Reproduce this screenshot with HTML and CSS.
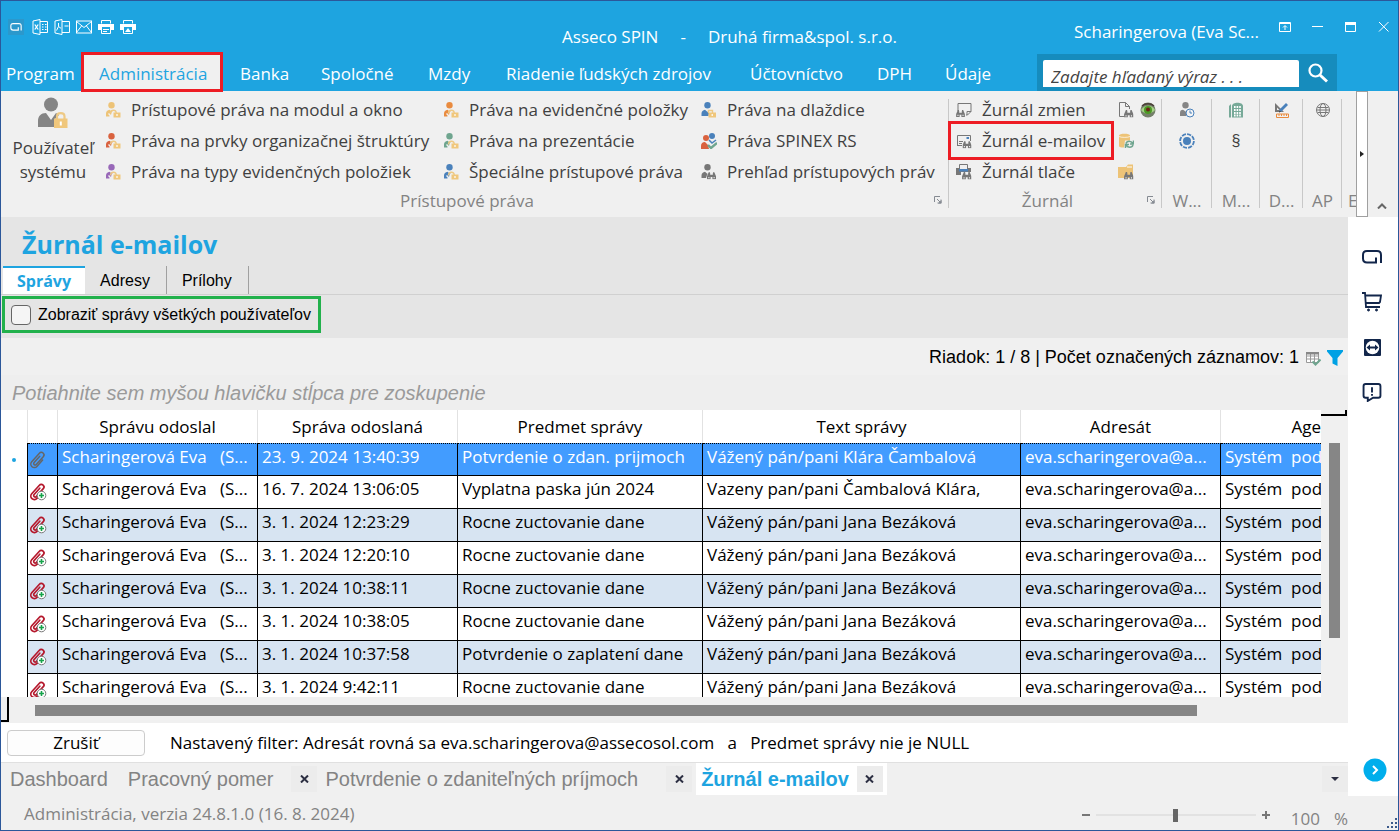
FILE: index.html
```html
<!DOCTYPE html>
<html lang="sk">
<head>
<meta charset="utf-8">
<title>Asseco SPIN</title>
<link rel="stylesheet" href="styles.css">
</head>
<body>
<svg class="defs" aria-hidden="true">
  <symbol id="user-lock" viewBox="0 0 16 16">
    <circle cx="6.5" cy="3.2" r="3.2" fill="currentColor"/>
    <path d="M1 14.5v-3c0-2 1.500-3.500 3.500-3.700L6 9l1-1 1 .5-1.500 2-.5 2.500-2-2-1 1 1.500 1.500V14.500z" fill="currentColor"/>
    <path d="M5.500 11.500C5.500 9 7 8.200 8.500 8.200S11.200 9 11.200 11" fill="none" stroke="#eec984" stroke-width="1.400"/>
    <rect x="8.500" y="10.500" width="7" height="5" fill="#f0c77c"/><path d="M12 12v2" stroke="#fff" stroke-width="1.200"/>
  </symbol>
  <symbol id="user-open" viewBox="0 0 16 16">
    <circle cx="6.500" cy="3.200" r="3.200" fill="currentColor"/>
    <path d="M.5 14v-2.500C.5 9.500 2 8 4 7.800L6.500 10 8 8v3l-.5 3z" fill="currentColor"/>
    <path d="M7.500 11V8.500h4V11" fill="none" stroke="#eec984" stroke-width="1.400"/>
    <rect x="7.500" y="10.500" width="7.500" height="5" fill="#f0c77c"/><path d="M11.200 12v2" stroke="#fff" stroke-width="1.200"/>
  </symbol>
  <symbol id="binocs" viewBox="0 0 10 8">
    <path d="M0 8V4.500L1.500 1h2v2h3V1h2L10 4.500V8H6V5.500H4V8z" fill="#777"/>
    <path d="M1.500 5.500h1.200v1.300H1.500zM7.300 5.500h1.200v1.300H7.300z" fill="#f0f0f0"/><path d="M1.700 0h1.600v1H1.700zM6.700 0h1.600v1H6.700z" fill="#777"/>
  </symbol>
  <symbol id="launcher" viewBox="0 0 8 8">
    <path d="M.5 6V.5H6M3 3l3.500 3.500M7 3.500V7H3.500" fill="none" stroke="#858a92"/><path d="M7.500 4v3.500H4z" fill="#858a92"/>
  </symbol>
  <symbol id="clip" viewBox="0 0 18 18">
    <path transform="rotate(-48 9 9)" fill="none" stroke="currentColor" stroke-width="1.500" stroke-linecap="round" d="M12 12.500H3.500a3.500 3.500 0 0 1 0-7H15a2.600 2.600 0 0 1 0 5.200H4.500a1.300 1.300 0 0 1 0-2.900H13"/>
  </symbol>
  <symbol id="clip-add" viewBox="0 0 18 18">
    <path transform="rotate(-48 9 9)" fill="none" stroke="#b5182c" stroke-width="1.700" stroke-linecap="round" d="M12 12.500H3.500a3.500 3.500 0 0 1 0-7H15a2.600 2.600 0 0 1 0 5.200H4.500a1.300 1.300 0 0 1 0-2.900H13"/>
    <circle cx="12.500" cy="12.500" r="4.300" fill="#fff" stroke="#777"/><path d="M12.500 10v5M10 12.500h5" stroke="#16a34a" stroke-width="1.600"/>
  </symbol>
  <symbol id="g-mark" viewBox="0 0 20 14">
    <path d="M19 13V5c0-2.800-1.200-4-4-4H5C2.200 1 1 2.200 1 5v3.500C1 11.300 2.200 12.500 5 12.500h9V7.500" fill="none" stroke="currentColor" stroke-width="2"/>
  </symbol>
  <symbol id="x" viewBox="0 0 9 8"><path d="M1 .5l7 7M8 .5l-7 7" stroke="#2c2f42" stroke-width="2"/></symbol>
</svg>

<div class="app">
  <header class="header">
    <div class="titlebar">
      <div class="quick">
        <button class="logo" aria-label="Asseco"><svg width="12" height="8"><use href="#g-mark"/></svg></button>
        <button aria-label="Excel"><svg width="16" height="16" viewBox="0 0 16 16" fill="none" stroke="#fff"><path d="M1 2l7-1.500v15L1 14zM8 2.500h7.500v11H8M10 5.500h1.500M13 5.500h1.500M10 8h1.500M13 8h1.500M10 10.500h1.500M13 10.500h1.500"/><path d="M2.800 5.500l3.400 5M6.200 5.500l-3.400 5" stroke-width="1.300"/></svg></button>
        <button aria-label="PDF"><svg width="16" height="16" viewBox="0 0 16 16" fill="none" stroke="#fff"><path d="M1 2l7-1.500v15L1 14zM8 2.500h7.500v11H8M10.500 7h4M4.500 4v3.500L2.500 11.500M4.500 7.500l2.500 1.800"/></svg></button>
        <button aria-label="E-mail"><svg width="16" height="16" viewBox="0 0 16 16" fill="none" stroke="#fff"><rect x=".5" y="2" width="15" height="12"/><path d="M.5 2.500L8 8.500l7.500-6M.5 13.500l5-6.500M15.500 13.500l-5-6.500"/></svg></button>
        <button aria-label="Tlačiť"><svg width="16" height="16" viewBox="0 0 16 16"><path d="M3.500 4.500v-3h9v3" fill="none" stroke="#fff"/><path d="M0 5h16v6h-3V8H3v3H0z" fill="#fff"/><path d="M3.500 8v6.500h9V8M5 10.500h6M5 12.500h4" fill="none" stroke="#fff"/></svg></button>
        <button aria-label="Rýchla tlač"><svg width="16" height="16" viewBox="0 0 16 16"><path d="M3.500 4.500v-3h9v3" fill="none" stroke="#fff"/><path d="M0 5h16v6h-3V8H3v3H0z" fill="#fff"/><path d="M3.500 8v6.500h9V8" fill="none" stroke="#fff"/><path d="M8 9l3 4H5z" fill="#fff"/></svg></button>
      </div>
      <div class="caption"><span>Asseco SPIN</span><span>-</span><span>Druhá firma&amp;spol. s.r.o.</span></div>
      <div class="account">Scharingerova (Eva Sc...</div>
      <div class="window-buttons">
        <button aria-label="Zobrazenie pása"><svg width="12" height="12" viewBox="0 0 12 12" fill="none" stroke="#fff"><path d="M.5 1.500h11v9H.5zM.5 2.500h11M6 9V5M4 6.500l2-2 2 2"/></svg></button>
        <button aria-label="Minimalizovať"><svg width="12" height="12" viewBox="0 0 12 12"><path d="M0 5.500h11" stroke="#fff"/></svg></button>
        <button aria-label="Maximalizovať"><svg width="12" height="12" viewBox="0 0 12 12"><path d="M.5 1.500h10v9H.5z" fill="none" stroke="#fff"/><path d="M0 1h11v3H0z" fill="#fff"/></svg></button>
        <button aria-label="Zavrieť"><svg width="12" height="12" viewBox="0 0 12 12"><path d="M1 1l9.500 9.500M10.500 1L1 10.500" stroke="#fff"/></svg></button>
      </div>
    </div>
    <nav class="menu">
      <a href="#">Program</a>
      <a href="#" class="current">Administrácia</a>
      <a href="#">Banka</a>
      <a href="#">Spoločné</a>
      <a href="#">Mzdy</a>
      <a href="#">Riadenie ľudských zdrojov</a>
      <a href="#">Účtovníctvo</a>
      <a href="#">DPH</a>
      <a href="#">Údaje</a>
      <form class="search">
        <input type="text" aria-label="Hľadať" placeholder="Zadajte hľadaný výraz . . .">
        <button type="button" aria-label="Hľadať"><svg width="20" height="20" viewBox="0 0 20 20" fill="none" stroke="#fff"><circle cx="7.500" cy="7.500" r="6" stroke-width="2.200"/><path d="M12 12l7 6.500" stroke-width="3"/></svg></button>
      </form>
    </nav>
  </header>

  <section class="ribbon">
    <div class="group rights">
      <div class="group-body">
        <button class="big">
          <svg width="30" height="32" viewBox="0 0 30 32"><circle cx="13" cy="7.500" r="7" fill="#858585"/><path d="M0 30v-6c0-5 3-8 8-8l5 7 5-7 3 2-5 5v7z" fill="#858585"/><path d="M19 22v-2.500c0-4.500 7.500-4.500 7.500 0V22" fill="none" stroke="#eec984" stroke-width="2.200"/><rect x="16" y="21.500" width="13.500" height="9.500" fill="#f0c77c"/><path d="M22.800 24.500v4" stroke="#fff" stroke-width="2"/></svg>
          <span>Používateľ<br>systému</span>
        </button>
        <div class="links first">
          <button><svg class="yellow"><use href="#user-lock"/></svg>Prístupové práva na modul a okno</button>
          <button><svg class="red"><use href="#user-lock"/></svg>Práva na prvky organizačnej štruktúry</button>
          <button><svg class="violet"><use href="#user-lock"/></svg>Práva na typy evidenčných položiek</button>
        </div>
        <div class="links second">
          <button><svg class="orange"><use href="#user-lock"/></svg>Práva na evidenčné položky</button>
          <button><svg class="green"><use href="#user-lock"/></svg>Práva na prezentácie</button>
          <button><svg class="blue"><use href="#user-lock"/></svg>Špeciálne prístupové práva</button>
        </div>
        <div class="links third">
          <button><svg class="blue"><use href="#user-open"/></svg>Práva na dlaždice</button>
          <button><svg viewBox="0 0 16 16"><circle cx="11" cy="3" r="3" fill="#4a81bb"/><circle cx="5" cy="5" r="3" fill="#d9623f"/><path d="M0 16v-3c0-2.500 1.500-4 4-4l3 3 1 4z" fill="#d9623f"/><path d="M8 7l3 3 4-3" fill="none" stroke="#4a81bb" stroke-width="1.500"/><path d="M7 12l3 3 6-5" fill="none" stroke="#6fa58f" stroke-width="2.400"/></svg>Práva SPINEX RS</button>
          <button><svg viewBox="0 0 16 16"><circle cx="6.500" cy="3.200" r="3.200" fill="#777"/><path d="M.5 14v-2.500C.5 9.500 2 8 4 7.800L6.500 10 8 8l-2 3-1 3z" fill="#777"/><use href="#binocs" x="6" y="8" width="9" height="7.500"/></svg>Prehľad prístupových práv</button>
        </div>
      </div>
      <div class="group-label with-launch">Prístupové práva<button class="launch" aria-label="Viac"><svg width="8" height="8"><use href="#launcher"/></svg></button></div>
    </div>
    <div class="group journal">
      <div class="group-body">
        <div class="links journal-links">
          <button><svg viewBox="0 0 16 16"><path d="M2 9V1.500h13v8L11.500 13H10" fill="none" stroke="#777"/><path d="M11 13V9.500h4" fill="none" stroke="#777"/><use href="#binocs" x="0" y="8" width="9" height="7"/></svg>Žurnál zmien</button>
          <button class="marked"><svg viewBox="0 0 16 16"><path d="M1.500 7V2.500h13V8" fill="none" stroke="#777"/><path d="M10.500 4h2.500v2h-2.500z" fill="#4a81bb"/><path d="M3 8.500h4M3 10.500h3M1 12.500h5" stroke="#777"/><path d="M1.500 6v7" stroke="#777"/><use href="#binocs" x="6.500" y="8" width="9" height="7.500"/></svg>Žurnál e-mailov</button>
          <button><svg viewBox="0 0 16 16"><path d="M3.500 5V.5h8V5" fill="none" stroke="#777"/><path d="M0 4h3v2h9V4h3v4H5v3H0z" fill="#777"/><path d="M3 5h9v2.500H3z" fill="#4a81bb"/><use href="#binocs" x="6" y="8" width="9.500" height="7.500"/></svg>Žurnál tlače</button>
        </div>
        <div class="icons two">
          <button aria-label="Dokument"><svg viewBox="0 0 16 16"><path d="M6 14.500H1.500V.5h6l4 4V7M7.500.5v4h4" fill="none" stroke="#777"/><use href="#binocs" x="6" y="8" width="9.500" height="7.500"/></svg></button>
          <button aria-label="Sledovanie"><svg viewBox="0 0 16 16"><circle cx="8" cy="8" r="7.500" fill="#75806a"/><path d="M1 8c3-5 11-6 14 0-3 4-11 5-14 0z" fill="#a5cf86"/><circle cx="8" cy="8" r="4" fill="#4c9a25"/><circle cx="8" cy="7.500" r="2" fill="#6a2417"/><path d="M2 4c3-3 9-3 12 0" fill="none" stroke="#4b3e38" stroke-width="1.500"/></svg></button>
          <button aria-label="Databáza"><svg viewBox="0 0 16 16"><path d="M1 2.500C1 0 12 0 12 2.500v5H7l-1 7c-3 0-5-.5-5-1.500z" fill="#edc377"/><path d="M1 3.500c2 1.200 9 1.200 11 0" fill="none" stroke="#fff" stroke-width=".7"/><path d="M8 10.500c1-3 5-3 7 0M15.500 7.500v3.500H12M15 12c-1 3-5 3-7 0M7.500 15v-3.500H11" fill="none" stroke="#6fa58f" stroke-width="1.500"/></svg></button>
          <span></span>
          <button aria-label="Priečinok"><svg viewBox="0 0 16 16"><path d="M0 3h8l2-2.500h5V14H0z" fill="#edc377"/><path d="M9 3h5" stroke="#fff"/><use href="#binocs" x="6" y="8" width="9.500" height="7.500"/></svg></button>
        </div>
      </div>
      <div class="group-label with-launch">Žurnál<button class="launch" aria-label="Viac"><svg width="8" height="8"><use href="#launcher"/></svg></button></div>
    </div>
    <div class="group w50">
      <div class="group-body icons">
        <button aria-label="Čas používateľa"><svg viewBox="0 0 16 16"><circle cx="6.500" cy="3.200" r="3.200" fill="#858585"/><path d="M1 14v-3c0-2 1-3.200 3-3.200l3 2V14z" fill="#858585"/><circle cx="11" cy="11" r="4" fill="#f5f5f5" stroke="#4a81bb"/><path d="M11 8.500V11h2" fill="none" stroke="#4a81bb"/></svg></button>
        <button aria-label="Proces"><svg viewBox="0 0 16 16"><circle cx="8" cy="8" r="4" fill="#4a81bb"/><circle cx="8" cy="8" r="6.900" fill="none" stroke="#4a81bb" stroke-width="1.800" stroke-dasharray="4.200 1.200"/></svg></button>
      </div>
      <div class="group-label">W...</div>
    </div>
    <div class="group w48">
      <div class="group-body icons">
        <button aria-label="Budova"><svg viewBox="0 0 16 16"><path d="M1 15.500V4l2-2v13.500z" fill="#77a998"/><path d="M4 15.500V4c0-4.500 11-4.500 11 0v11.500z" fill="#77a998"/><path d="M6 5h7M6 8h7M6 11h7M6 13.500h7" stroke="#fff" stroke-width="2" stroke-dasharray="1.600 1"/></svg></button>
        <button class="section-sign">§</button>
      </div>
      <div class="group-label">M...</div>
    </div>
    <div class="group w43">
      <div class="group-body icons">
        <button aria-label="Návrh"><svg viewBox="0 0 16 16"><path d="M1 1l9 9H1z" fill="#777"/><path d="M3 5.500L5.500 8H3z" fill="#f0f0f0"/><path d="M6 9l7-7" stroke="#4a81bb" stroke-width="2.800"/><path d="M5 10l1.500-.5" stroke="#333"/><path d="M2.500 12h12v3.500h-12zM5 12v2M7.500 12v2M10 12v2M12.500 12v2" fill="none" stroke="#e98b3f"/></svg></button>
      </div>
      <div class="group-label">D...</div>
    </div>
    <div class="group w39">
      <div class="group-body icons">
        <button aria-label="Web"><svg viewBox="0 0 16 16" fill="none" stroke="#777"><circle cx="8" cy="8" r="6.500"/><ellipse cx="8" cy="8" rx="3" ry="6.500"/><path d="M1.500 8h13M2.500 5.500h11M2.500 10.500h11"/></svg></button>
      </div>
      <div class="group-label">AP</div>
    </div>
    <div class="group cut"><div class="group-body"></div><div class="group-label">E</div></div>
    <button class="ribbon-next" aria-label="Ďalej"><svg width="4" height="6"><path d="M0 0l4 3-4 3z" fill="#222"/></svg></button>
    <button class="collapse" aria-label="Zbaliť"><svg width="10" height="6" viewBox="0 0 10 6"><path d="M1 5.500l4-4 4 4" fill="none" stroke="#666" stroke-width="2"/></svg></button>
  </section>

  <div class="workspace">
    <main class="content">
      <div class="page-head">
        <h1>Žurnál e-mailov</h1>
        <div class="subtabs">
          <button class="active">Správy</button><button>Adresy</button><button>Prílohy</button>
        </div>
      </div>
      <div class="options">
        <label><input type="checkbox">Zobraziť správy všetkých používateľov</label>
      </div>
      <div class="counter">
        <span>Riadok: 1 / 8 | Počet označených záznamov: 1</span>
        <svg width="16" height="16" viewBox="0 0 16 16"><path d="M1.500 2.500h12v10h-12zM1.500 6h12M1.500 9h12M5.500 3v9.500M9.500 3v9.500" fill="#fff" stroke="#999"/><path d="M1 2h13v2.500H1z" fill="#888"/><path d="M7.500 11.500l3 3 5-5" fill="none" stroke="#6fa58f" stroke-width="2"/></svg>
        <svg width="16" height="16" viewBox="0 0 16 16"><path d="M0 0h16v1.500L10.500 8v8L5.500 13.500V8L0 1.500z" fill="#00a1e4"/></svg>
      </div>
      <div class="grouping">Potiahnite sem myšou hlavičku stĺpca pre zoskupenie</div>
      <div class="grid">
        <div class="grid-view">
          <table>
            <colgroup><col class="c-mark"><col class="c-clip"><col class="c-200"><col class="c-200"><col class="c-subject"><col class="c-text"><col class="c-200"><col></colgroup>
            <thead>
              <tr><th></th><th></th><th>Správu odoslal</th><th>Správa odoslaná</th><th>Predmet správy</th><th>Text správy</th><th>Adresát</th><th class="cut-head">Age</th></tr>
            </thead>
            <tbody>
              <tr class="selected"><td><span class="dot"></span></td><td><svg><use href="#clip"/></svg></td><td>Scharingerová Eva &nbsp; (S...</td><td>23. 9. 2024 13:40:39</td><td>Potvrdenie o zdan. prijmoch</td><td>Vážený pán/pani Klára Čambalová</td><td>eva.scharingerova@a...</td><td>Systém&nbsp; pod</td></tr>
              <tr><td></td><td><svg><use href="#clip-add"/></svg></td><td>Scharingerová Eva &nbsp; (S...</td><td>16. 7. 2024 13:06:05</td><td>Vyplatna paska jún 2024</td><td>Vazeny pan/pani Čambalová Klára,</td><td>eva.scharingerova@a...</td><td>Systém&nbsp; pod</td></tr>
              <tr><td></td><td><svg><use href="#clip-add"/></svg></td><td>Scharingerová Eva &nbsp; (S...</td><td>3. 1. 2024 12:23:29</td><td>Rocne zuctovanie dane</td><td>Vážený pán/pani Jana Bezáková</td><td>eva.scharingerova@a...</td><td>Systém&nbsp; pod</td></tr>
              <tr><td></td><td><svg><use href="#clip-add"/></svg></td><td>Scharingerová Eva &nbsp; (S...</td><td>3. 1. 2024 12:20:10</td><td>Rocne zuctovanie dane</td><td>Vážený pán/pani Jana Bezáková</td><td>eva.scharingerova@a...</td><td>Systém&nbsp; pod</td></tr>
              <tr><td></td><td><svg><use href="#clip-add"/></svg></td><td>Scharingerová Eva &nbsp; (S...</td><td>3. 1. 2024 10:38:11</td><td>Rocne zuctovanie dane</td><td>Vážený pán/pani Jana Bezáková</td><td>eva.scharingerova@a...</td><td>Systém&nbsp; pod</td></tr>
              <tr><td></td><td><svg><use href="#clip-add"/></svg></td><td>Scharingerová Eva &nbsp; (S...</td><td>3. 1. 2024 10:38:05</td><td>Rocne zuctovanie dane</td><td>Vážený pán/pani Jana Bezáková</td><td>eva.scharingerova@a...</td><td>Systém&nbsp; pod</td></tr>
              <tr><td></td><td><svg><use href="#clip-add"/></svg></td><td>Scharingerová Eva &nbsp; (S...</td><td>3. 1. 2024 10:37:58</td><td>Potvrdenie o zaplatení dane</td><td>Vážený pán/pani Jana Bezáková</td><td>eva.scharingerova@a...</td><td>Systém&nbsp; pod</td></tr>
              <tr><td></td><td><svg><use href="#clip-add"/></svg></td><td>Scharingerová Eva &nbsp; (S...</td><td>3. 1. 2024 9:42:11</td><td>Rocne zuctovanie dane</td><td>Vážený pán/pani Jana Bezáková</td><td>eva.scharingerova@a...</td><td>Systém&nbsp; pod</td></tr>
            </tbody>
          </table>
        </div>
        <div class="vscroll"><div class="corner"></div><div class="thumb"></div></div>
      </div>
      <div class="hscroll"><div class="corner"></div><div class="thumb"></div></div>
      <div class="filter">
        <button>Zrušiť</button>
        <span>Nastavený filter: Adresát rovná sa eva.scharingerova@assecosol.com &nbsp; a &nbsp; Predmet správy nie je NULL</span>
      </div>
      <div class="doc-tabs">
        <div class="doc dash"><a href="#">Dashboard</a></div>
        <div class="doc"><a href="#">Pracovný pomer</a><button aria-label="Zavrieť"><svg width="9" height="8"><use href="#x"/></svg></button></div>
        <div class="doc wide"><a href="#">Potvrdenie o zdaniteľných príjmoch</a><button aria-label="Zavrieť"><svg width="9" height="8"><use href="#x"/></svg></button></div>
        <div class="doc open"><a href="#">Žurnál e-mailov</a><button aria-label="Zavrieť"><svg width="9" height="8"><use href="#x"/></svg></button></div>
        <button class="more" aria-label="Ďalšie karty"><svg width="8" height="4"><path d="M0 0h8L4 4z" fill="#2c2f42"/></svg></button>
      </div>
    </main>
    <aside class="side">
      <button aria-label="Asseco"><svg width="20" height="14"><use href="#g-mark"/></svg></button>
      <button aria-label="Obchod"><svg width="20" height="20" viewBox="0 0 20 20" fill="none" stroke="currentColor" stroke-width="1.800"><path d="M0 1h3l1 14h14M3.500 3.500H19l-1 6.500-1 1H4"/><circle cx="6.500" cy="18" r="1" fill="currentColor" stroke-width="1"/><circle cx="14.500" cy="18" r="1" fill="currentColor" stroke-width="1"/></svg></button>
      <button aria-label="TeamViewer"><svg width="17" height="17" viewBox="0 0 17 17"><rect width="17" height="17" rx="1" fill="currentColor"/><circle cx="8.500" cy="8.500" r="6.800" fill="#fff"/><path d="M2.500 8.500L6 5.500v2h5v-2l3.500 3-3.500 3v-2H6v2z" fill="currentColor"/></svg></button>
      <button aria-label="Správa"><svg width="20" height="19" viewBox="0 0 18 18" fill="none" stroke="currentColor" stroke-width="1.800"><path d="M3 1h12c1.500 0 2 .5 2 2v9c0 1.500-.5 2-2 2h-5l-5 3v-3H3c-1.500 0-2-.5-2-2V3c0-1.500.5-2 2-2zM9 4v5M9 10.500v1.500"/></svg></button>
      <button class="expand" aria-label="Rozbaliť"><svg width="24" height="24" viewBox="0 0 24 24"><circle cx="12" cy="12" r="11.500" fill="#00aeec"/><path d="M10 8l4 4-4 4" fill="none" stroke="#fff" stroke-width="2"/></svg></button>
    </aside>
  </div>

  <footer class="status">
    <span class="version">Administrácia, verzia 24.8.1.0 (16. 8. 2024)</span>
    <div class="zoom">
      <button aria-label="Zmenšiť"><svg width="8" height="8"><path d="M0 4h8" stroke="#777" stroke-width="2"/></svg></button>
      <input type="range" min="0" max="200" value="100" aria-label="Mierka">
      <button aria-label="Zväčšiť"><svg width="8" height="8"><path d="M0 4h8M4 0v8" stroke="#777" stroke-width="2"/></svg></button>
    </div>
    <span class="percent"><span>100</span><span>%</span></span>
    <svg class="grip" width="12" height="12"><path d="M9 1h2M5 5h2M9 5h2M1 9h2M5 9h2M9 9h2" stroke="#3c5a8a" stroke-width="2"/></svg>
  </footer>
</div>
</body>
</html>
```
FILE: styles.css
```css
* { box-sizing: border-box; }
body {
  margin: 0;
  font-family: "Open Sans", "Noto Sans", sans-serif;
  font-size: 17px;
  line-height: 24px;
  color: #000;
}
button {
  border: 0;
  padding: 0;
  background: none;
  font: inherit;
  color: inherit;
}
a { color: inherit; text-decoration: none; }
svg { display: block; flex: none; }
.defs { position: absolute; width: 0; height: 0; }

.app {
  display: flex;
  flex-direction: column;
  height: 100vh;
  border: 1px solid #2b579a;
  background: #f0f0f0;
  overflow: hidden;
  white-space: nowrap;
}

/* Header */
.header { background: #1ea4e0; color: #fff; }
.titlebar { display: flex; height: 52px; }
.quick { display: flex; gap: 6px; padding: 18px 0 0 7px; align-items: flex-start; }
.quick .logo {
  display: grid;
  place-items: center;
  width: 16px;
  height: 16px;
  margin-right: 2px;
  background: #2b98cc;
}
.caption { display: flex; gap: 22px; margin-left: auto; padding-top: 24px; }
.account { margin-left: 177px; padding-top: 19px; }
.window-buttons { display: flex; gap: 21px; padding: 20px 8px 0 20px; align-items: flex-start; }

.menu {
  display: grid;
  grid-template-columns: 81px 140px 81px 107px 78px 244px 127px 68px 110px 300px;
  height: 38px;
}
.menu a { padding: 9px 0 0 18px; }
.menu a:first-child { padding-left: 5px; }
.menu .current {
  position: relative;
  padding-left: 17px;
  background: #f0f0f0;
  color: #1ea4e0;
  outline: 3px solid #ed1c24;
  outline-offset: -2px;
}
.search { display: flex; margin-top: 1px; background: #168cbd; }
.search input {
  width: 256px;
  height: 27px;
  margin: 6px 0 0 6px;
  padding: 6px 8px 0;
  border: 0;
  border-radius: 2px 2px 0 0;
  background: #fff;
  font: italic 17px "Open Sans", "Noto Sans", sans-serif;
}
.search input::placeholder { color: #444; opacity: 1; }
.search button { margin-left: 9px; }

/* Ribbon */
.ribbon { display: flex; height: 126px; color: #404040; }
.group { position: relative; flex: none; display: flex; flex-direction: column; }
.group::after {
  content: "";
  position: absolute;
  top: 8px;
  right: 0;
  bottom: 9px;
  width: 1px;
  background: #c8c8c8;
}
.group-body { display: flex; height: 98px; }
.group-label { position: relative; color: #838383; text-align: center; }
.with-launch { padding-right: 16px; }
.launch { position: absolute; right: 7px; top: 7px; }
.rights { width: 948px; }
.journal { width: 213px; }
.w50 { width: 50px; }
.w48 { width: 48px; }
.w43 { width: 43px; }
.w39 { width: 39px; }
.cut { width: 14px; overflow: hidden; }
.cut::after { display: none; }
.cut .group-label { padding-left: 6px; text-align: left; }

.big {
  display: flex;
  flex-direction: column;
  align-items: center;
  gap: 7px;
  width: 104px;
  padding-top: 6px;
}
.links { display: flex; flex-direction: column; padding-top: 3px; }
.links button {
  display: flex;
  align-items: center;
  gap: 10px;
  height: 31px;
}
.links svg, .icons svg { width: 16px; height: 16px; }
.first { width: 338px; }
.second { width: 258px; }
.journal-links { width: 169px; padding-left: 3px; }
.journal-links button { width: 158px; padding-left: 4px; }
.marked { outline: 3px solid #ed1c24; outline-offset: 1px; }
.yellow { color: #edc377; }
.red { color: #d9623f; }
.violet { color: #9868b8; }
.orange { color: #e98b3f; }
.green { color: #6fa58f; }
.blue { color: #4a81bb; }

.icons {
  display: grid;
  grid-auto-rows: 31px;
  justify-items: center;
  align-items: center;
  padding-top: 3px;
}
.two { grid-template-columns: 16px 16px; gap: 0 6px; }
.section-sign { font-family: "Liberation Sans", sans-serif; font-size: 16px; }

.ribbon-next {
  display: grid;
  place-items: center;
  width: 12px;
  border: 1px solid #a0a0a0;
  background: #fff;
}
.collapse { margin-left: 9px; padding: 104px 0 0; }

/* Workspace */
.workspace { display: flex; flex: 1; min-height: 0; }
.content { display: flex; flex-direction: column; flex: 1; min-width: 0; }
.page-head { padding-top: 11px; background: #e5e5e5; border-bottom: 1px solid #d0d0d0; }
h1 {
  margin: 0 0 6px 21px;
  font-size: 25px;
  line-height: 32px;
  font-weight: 700;
  color: #1ea4e0;
}
.subtabs { display: flex; height: 28px; padding-left: 2px; }
.subtabs button {
  padding: 1px 16px 0 15px;
  border-right: 1px solid #a0a0a0;
  font: 16px "Liberation Sans", sans-serif;
}
.subtabs .active {
  padding: 0 14px;
  border-right: 0;
  border-top: 2px solid #1ea4e0;
  background: #fff;
  color: #1ea4e0;
  font: 700 16px/24px "Open Sans", "Noto Sans", sans-serif;
}
.options { height: 43px; padding: 1px; background: #e5e5e5; }
.options label {
  display: inline-flex;
  align-items: center;
  gap: 7px;
  width: 319px;
  height: 37px;
  padding-left: 6px;
  border: 3px solid #22b14c;
  font: 16px "Liberation Sans", sans-serif;
}
.options input {
  appearance: none;
  width: 20px;
  height: 20px;
  margin: 0;
  border: 1px solid #666;
  border-radius: 4px;
  background: #f5f5f5;
}
.counter {
  display: flex;
  align-items: center;
  justify-content: flex-end;
  gap: 6px;
  height: 37px;
  padding: 2px 5px 0 0;
  font: 18px "Liberation Sans", sans-serif;
}
.grouping {
  height: 35px;
  padding: 7px 11px 0;
  background: #eee;
  color: #9a9a9a;
  font: italic 20px "Liberation Sans", sans-serif;
}

/* Data grid */
.grid { display: flex; flex: 1; min-height: 0; background: #fff; }
.grid-view { flex: 1; min-width: 0; overflow: hidden; }
table { width: 100%; table-layout: fixed; border-collapse: separate; border-spacing: 0; }
.c-mark { width: 27px; }
.c-clip { width: 30px; }
.c-200 { width: 200px; }
.c-subject { width: 245px; }
.c-text { width: 318px; }
th {
  height: 33px;
  padding: 0;
  border-right: 1px solid #e2e2e2;
  font-weight: 400;
}
.cut-head { border-right: 0; text-align: right; }
td {
  height: 33px;
  padding: 0 0 6px 4px;
  border-right: 1px solid #000;
  border-bottom: 1px solid #000;
  overflow: hidden;
}
td:first-child { padding: 0; border-bottom: 0; background: #fff; }
td:nth-child(2) { padding: 0 0 0 1px; }
td:last-child { border-right: 0; }
td svg { width: 18px; height: 18px; color: #666; }
tbody tr:nth-child(odd) td:nth-child(n+2) { background: #d7e4f2; }
tbody tr.selected td:nth-child(n+2) {
  background: #429cff;
  border-top: 1px dotted #000;
  color: #fff;
}
.dot { display: block; width: 4px; height: 4px; margin-left: 11px; border-radius: 2px; background: #1ea4e0; }

.vscroll { width: 27px; background: #f0f0f0; }
.vscroll .corner { width: 26px; height: 6px; border: solid #000; border-width: 0 2px 2px 0; }
.vscroll .thumb { width: 11px; height: 195px; margin: 27px 0 0 8px; background: #868686; }
.hscroll { display: flex; height: 26px; background: #f0f0f0; }
.hscroll .corner { width: 8px; height: 25px; border: solid #000; border-width: 0 2px 2px 0; }
.hscroll .thumb { width: 1162px; height: 11px; margin: 8px 0 0 26px; background: #868686; }

.filter { display: flex; align-items: center; gap: 25px; height: 39px; padding: 0 6px; background: #fff; }
.filter button { width: 138px; height: 26px; border: 1px solid #ccc; border-radius: 4px; background: #fdfdfd; }

.doc-tabs {
  display: flex;
  height: 34px;
  padding-left: 9px;
  border-top: 1px solid #e0e0e0;
  color: #838383;
  font: 20px "Liberation Sans", sans-serif;
}
.doc { display: flex; align-items: center; gap: 18px; height: 32px; margin-right: 8px; }
.doc button, .more { display: grid; place-items: center; width: 26px; height: 26px; background: #ececec; }
.dash { margin-right: 20px; }
.wide { gap: 28px; margin-right: 4px; }
.open { gap: 8px; padding: 0 4px 0 5px; background: #fff; color: #1ea4e0; font-weight: 700; }
.more { margin: 3px 0 0 auto; }

.side { display: flex; flex-direction: column; align-items: center; width: 50px; padding: 30px 2px 0 0; background: #fff; color: #12264b; }
.side button { height: 20px; margin-bottom: 25px; }
.side .expand { height: 24px; margin: auto 0 14px 5px; }

/* Status bar */
.status { display: flex; height: 34px; padding-left: 23px; color: #838383; }
.version { padding-top: 6px; }
.zoom { display: flex; align-items: center; gap: 6px; height: 38px; margin-left: auto; }
.zoom input { appearance: none; width: 160px; height: 13px; margin: 0; background: linear-gradient(#e2e2e2, #e2e2e2) center / 100% 2px no-repeat; }
.zoom input::-webkit-slider-thumb { appearance: none; width: 5px; height: 13px; background: #666; }
.percent { display: flex; gap: 14px; padding: 11px 0 0 21px; }
.grip { align-self: flex-end; margin-left: 38px; }
```
